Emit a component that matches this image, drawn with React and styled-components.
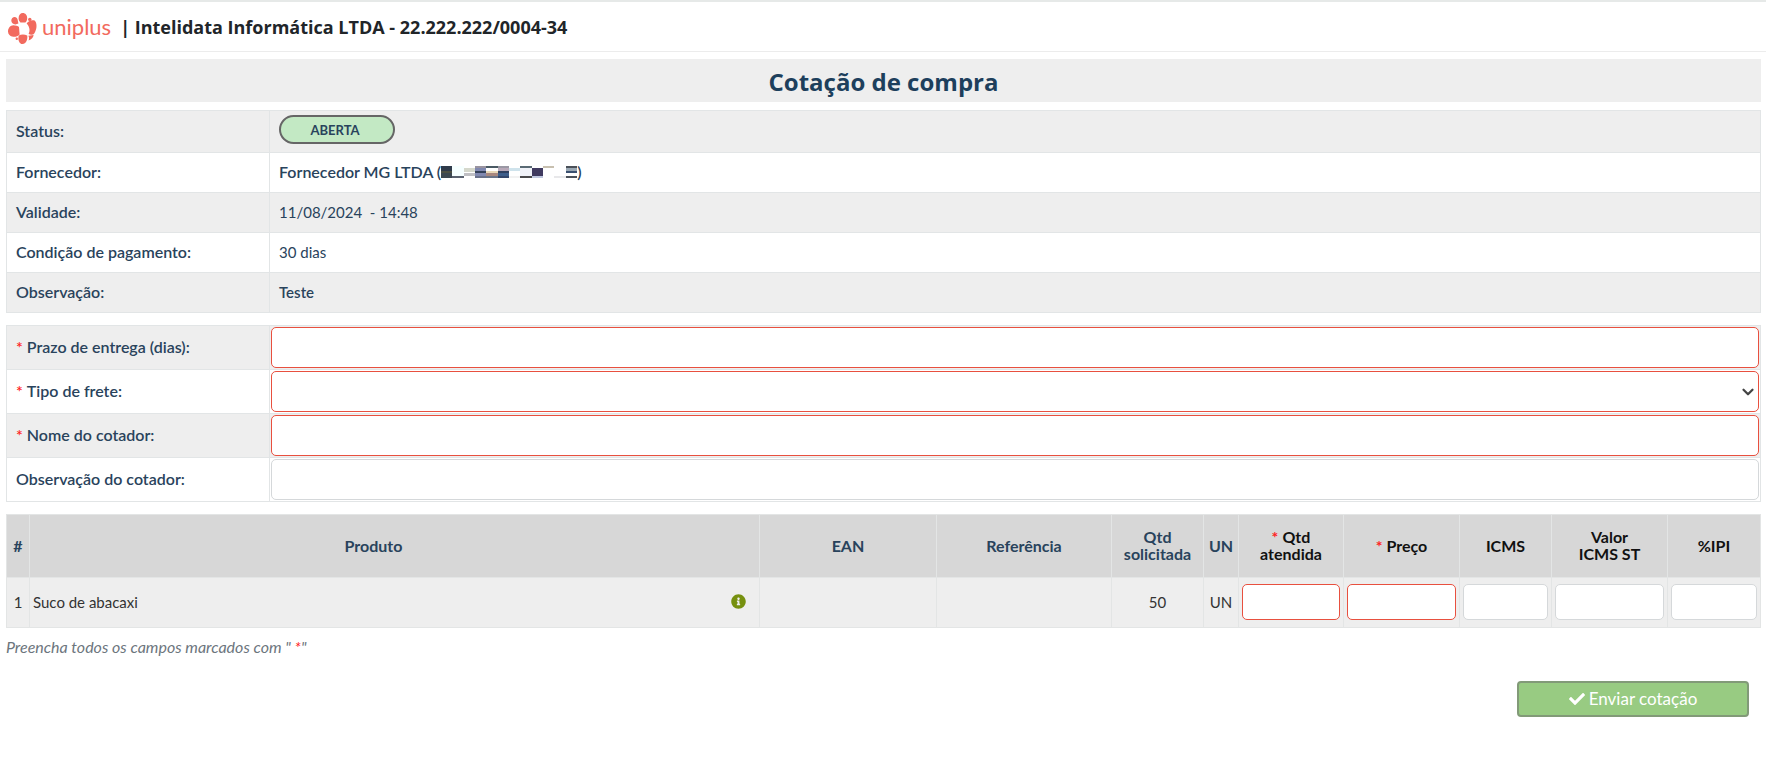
import React from "react";
import styled, { createGlobalStyle } from "styled-components";
import { FaCheck, FaInfoCircle } from "react-icons/fa";
import { ChevronDown } from "lucide-react";

const GlobalStyle = createGlobalStyle`
  *, *::before, *::after { box-sizing: border-box; }
  body {
    margin: 0;
    background: #fff;
    color: #29435c;
    font-family: Lato, "Liberation Sans", sans-serif;
    font-size: 15px;
    line-height: 20px;
  }
`;

const Header = styled.header`
  display: flex;
  align-items: center;
  gap: 9px;
  height: 52px;
  padding: 0 8px;
  border-top: 2px solid #e6e9e8;
  border-bottom: 1px solid #ececec;
`;

const Brand = styled.a`
  display: flex;
  align-items: center;
  gap: 5px;
  color: #f26a5e;
  font-size: 22px;
  line-height: 24px;
  text-decoration: none;
`;

const Company = styled.span`
  color: #212529;
  font-family: "Open Sans", "Noto Sans", sans-serif;
  font-size: 18px;
  font-weight: 700;
  line-height: 24px;
`;

const Page = styled.main`
  padding: 7px 5px 0 6px;
`;

const Title = styled.h1`
  margin: 0 0 8px;
  padding: 7px 0 4px;
  background: #eee;
  color: #1d3f5c;
  font-family: "Open Sans", "Noto Sans", sans-serif;
  font-size: 24px;
  font-weight: 700;
  line-height: 32px;
  text-align: center;
`;

const DetailTable = styled.table`
  width: 100%;
  margin-bottom: 12px;
  border-collapse: collapse;
  table-layout: fixed;

  th, td { border: 1px solid #e2e5e6; text-align: left; }
  th { width: 263px; padding: 0 9px 2px; font-size: 16px; font-weight: 600; }
  td { padding: ${(p) => (p.$form ? "1px" : "0 9px 2px")}; }
  tr { height: ${(p) => (p.$form ? 44 : 40)}px; }
  tr:nth-child(odd) { background: #eee; }
`;

const Strong = styled.strong`
  font-weight: 600;
`;

const Badge = styled.span`
  display: flex;
  align-items: center;
  justify-content: center;
  width: 116px;
  height: 29px;
  margin: 4px 0 6px;
  padding-right: 4px;
  border: 2px solid #666;
  border-radius: 15px;
  background: #c3e9c4;
  font-size: 13px;
  font-weight: 700;
`;

const Supplier = styled.span`
  display: flex;
  align-items: center;
  font-size: 16px;
  font-weight: 600;
`;

const Required = styled.span`
  margin-right: 4px;
  color: #f22;
`;

const Field = styled.input`
  display: block;
  width: 100%;
  height: ${(p) => (p.$small ? 36 : 41)}px;
  padding: 0 8px;
  border: 1px solid ${(p) => (p.required ? "#e8503f" : "#d5d8da")};
  border-radius: 5px;
  background: #fff;
  color: inherit;
  font: inherit;
`;

const SelectBox = styled.div`
  display: grid;
  align-items: center;

  select, svg { grid-area: 1 / 1; }
  select { appearance: none; }
  svg {
    justify-self: end;
    margin-right: 2px;
    color: #444;
    pointer-events: none;
  }
`;

const ItemsTable = styled.table`
  width: 100%;
  border-collapse: collapse;
  table-layout: fixed;

  th, td { border: 1px solid #e3e5e5; text-align: center; }
  td {
    height: 50px;
    padding: 0 3px 2px;
    background: #eee;
    color: #333;
    font-size: 15px;
  }
`;

const Heading = styled.th`
  height: 63px;
  padding: 0 ${(p) => (p.$product ? 42 : 0)}px 2px 0;
  background: #d7d7d7;
  color: ${(p) => (p.$editable ? "#111" : "#29435c")};
  font-size: 16px;
  font-weight: 700;
  line-height: 17px;
`;

const Product = styled.div`
  display: flex;
  align-items: center;
  justify-content: space-between;
  padding-right: 10px;

  svg { color: #76900f; }
`;

const Note = styled.p`
  margin: 9px 0 0;
  color: #6c757d;
  font-size: 16px;
  font-style: italic;

  span { color: #f22; }
`;

const Actions = styled.div`
  display: flex;
  justify-content: flex-end;
  padding: 24px 12px 0;
`;

const Submit = styled.button`
  display: flex;
  align-items: center;
  justify-content: center;
  gap: 4px;
  width: 232px;
  height: 36px;
  border: 2px solid #829a78;
  border-radius: 4px;
  background: #98cb82;
  color: #fff;
  font: inherit;
  font-size: 17px;
`;

function Logo() {
  return (
    <svg width="29" height="34" viewBox="0 0 29 34" fill="currentColor" aria-hidden="true">
      <path d="M10.6 8.2C10.6 5 12.4 3 14.8 3c2.600 0 4.400 2.200 4.400 5 0 2-.7 3.600-1.800 4.600l-5-.2c-1.100-1-1.800-2.400-1.800-4.200z" />
      <path d="M3.300 10.600c0-2.100 1.500-3.600 3.400-3.600 1.500 0 2.500.9 2.900 2.400l.8 4.200-3 .8c-2.400-.1-4.100-1.700-4.100-3.800z" />
      <path d="M0 21.200C0 18 2.400 15.200 5.400 15.200c2.100 0 4.600.7 5.600 1.800l.6 7.400C10.200 26 7.600 26.900 5.200 26.700 2.200 26.400 0 24.300 0 21.200z" />
      <path d="M10.800 25.400c2.200-1.200 6-1.200 8.400 0 .6 2.600-.4 8.600-4.800 8.600-3 0-5-4.800-3.600-8.600z" />
      <path d="M18.600 13.400c1.600-2.200 5-4.200 8-2.800 2.800 2.600 2.400 9-.4 12.800-1.400 1.800-4.200 1.900-5.600.4 1.600-2.800 1.200-7.400-2-10.400z" />
      <path d="M20.400 25.800l5.200-.8c-.2 2.400-2 4.600-5 5.400.6-1.600.6-3-.2-4.600z" />
      <circle cx="21.800" cy="9.400" r="1.700" />
      <circle cx="8.800" cy="28.800" r="1.200" />
    </svg>
  );
}

const MOSAIC = [
  [0, 0, 11, 5, "#2f3a4a"], [0, 5, 11, 2, "#4c5044"], [0, 7, 11, 5, "#3b4750"],
  [11, 0, 12, 10, "#f6ffff"], [11, 10, 12, 2, "#5a6270"],
  [23, 2, 11, 4, "#d5d8cc"], [23, 7, 11, 3, "#c0c0c4"],
  [34, 0, 11, 2, "#9a94a0"], [34, 2, 11, 3, "#8088b0"], [34, 5, 11, 2, "#33405a"], [34, 7, 11, 3, "#8088b0"], [34, 10, 11, 2, "#68708a"],
  [45, 0, 12, 2, "#4a5a64"], [45, 5, 12, 2, "#e8d8b8"], [45, 7, 12, 3, "#a88880"], [45, 10, 12, 2, "#6a7488"],
  [57, 0, 11, 2, "#9a98a4"], [57, 2, 11, 3, "#b8a8b8"], [57, 5, 11, 2, "#2f4060"], [57, 7, 11, 3, "#3d5d8a"], [57, 10, 11, 2, "#33466a"],
  [68, 2, 11, 3, "#cfe3ec"], [68, 10, 11, 2, "#f2f2f2"],
  [79, 0, 12, 2, "#5a6a74"], [79, 2, 12, 8, "#f0f2f8"], [79, 10, 12, 2, "#4a4a4c"],
  [91, 2, 11, 8, "#403a60"], [91, 10, 11, 2, "#c0c8e0"],
  [102, 0, 11, 2, "#c8c0b0"], [113, 10, 12, 2, "#e8e8ea"],
  [125, 0, 11, 2, "#4a5058"], [125, 2, 11, 3, "#9aa8b4"], [125, 5, 11, 2, "#3a5070"], [125, 10, 11, 2, "#4a5058"],
];

function Redacted() {
  return (
    <svg width="136" height="12" viewBox="0 0 136 12" shapeRendering="crispEdges" aria-hidden="true">
      {MOSAIC.map(([x, y, w, h, fill]) => (
        <rect key={`${x}-${y}`} x={x} y={y} width={w} height={h} fill={fill} />
      ))}
    </svg>
  );
}

const Star = () => <Required>*</Required>;

export default function App() {
  return (
    <>
      <GlobalStyle />
      <Header>
        <Brand href="#"><Logo />uniplus</Brand>
        <Company>| Intelidata Informática LTDA - 22.222.222/0004-34</Company>
      </Header>
      <Page>
        <Title>Cotação de compra</Title>
        <DetailTable>
          <tbody>
            <tr><th scope="row">Status:</th><td><Badge>ABERTA</Badge></td></tr>
            <tr><th scope="row">Fornecedor:</th><td><Supplier>Fornecedor MG LTDA (<Redacted />)</Supplier></td></tr>
            <tr><th scope="row">Validade:</th><td>11/08/2024 &nbsp;- 14:48</td></tr>
            <tr><th scope="row">Condição de pagamento:</th><td>30 dias</td></tr>
            <tr><th scope="row">Observação:</th><td><Strong>Teste</Strong></td></tr>
          </tbody>
        </DetailTable>
        <DetailTable $form>
          <tbody>
            <tr>
              <th><label htmlFor="prazo"><Star />Prazo de entrega (dias):</label></th>
              <td><Field id="prazo" required /></td>
            </tr>
            <tr>
              <th><label htmlFor="frete"><Star />Tipo de frete:</label></th>
              <td>
                <SelectBox>
                  <Field as="select" id="frete" required><option value="" /></Field>
                  <ChevronDown size={18} strokeWidth={3} />
                </SelectBox>
              </td>
            </tr>
            <tr>
              <th><label htmlFor="nome"><Star />Nome do cotador:</label></th>
              <td><Field id="nome" required /></td>
            </tr>
            <tr>
              <th><label htmlFor="obs">Observação do cotador:</label></th>
              <td><Field id="obs" /></td>
            </tr>
          </tbody>
        </DetailTable>
        <ItemsTable>
          <colgroup>
            <col width="23" /><col /><col width="177" /><col width="175" /><col width="92" />
            <col width="35" /><col width="105" /><col width="116" /><col width="92" />
            <col width="116" /><col width="93" />
          </colgroup>
          <thead>
            <tr>
              <Heading>#</Heading>
              <Heading $product>Produto</Heading>
              <Heading>EAN</Heading>
              <Heading>Referência</Heading>
              <Heading>Qtd<br />solicitada</Heading>
              <Heading>UN</Heading>
              <Heading $editable><Star />Qtd<br />atendida</Heading>
              <Heading $editable><Star />Preço</Heading>
              <Heading $editable>ICMS</Heading>
              <Heading $editable>Valor<br />ICMS ST</Heading>
              <Heading $editable>%IPI</Heading>
            </tr>
          </thead>
          <tbody>
            <tr>
              <td>1</td>
              <td><Product>Suco de abacaxi <FaInfoCircle size={15} /></Product></td>
              <td />
              <td />
              <td>50</td>
              <td>UN</td>
              <td><Field $small required aria-label="Qtd atendida" /></td>
              <td><Field $small required aria-label="Preço" /></td>
              <td><Field $small aria-label="ICMS" /></td>
              <td><Field $small aria-label="Valor ICMS ST" /></td>
              <td><Field $small aria-label="%IPI" /></td>
            </tr>
          </tbody>
        </ItemsTable>
        <Note>Preencha todos os campos marcados com " <span>*</span>"</Note>
        <Actions>
          <Submit type="button"><FaCheck size={16} />Enviar cotação</Submit>
        </Actions>
      </Page>
    </>
  );
}
